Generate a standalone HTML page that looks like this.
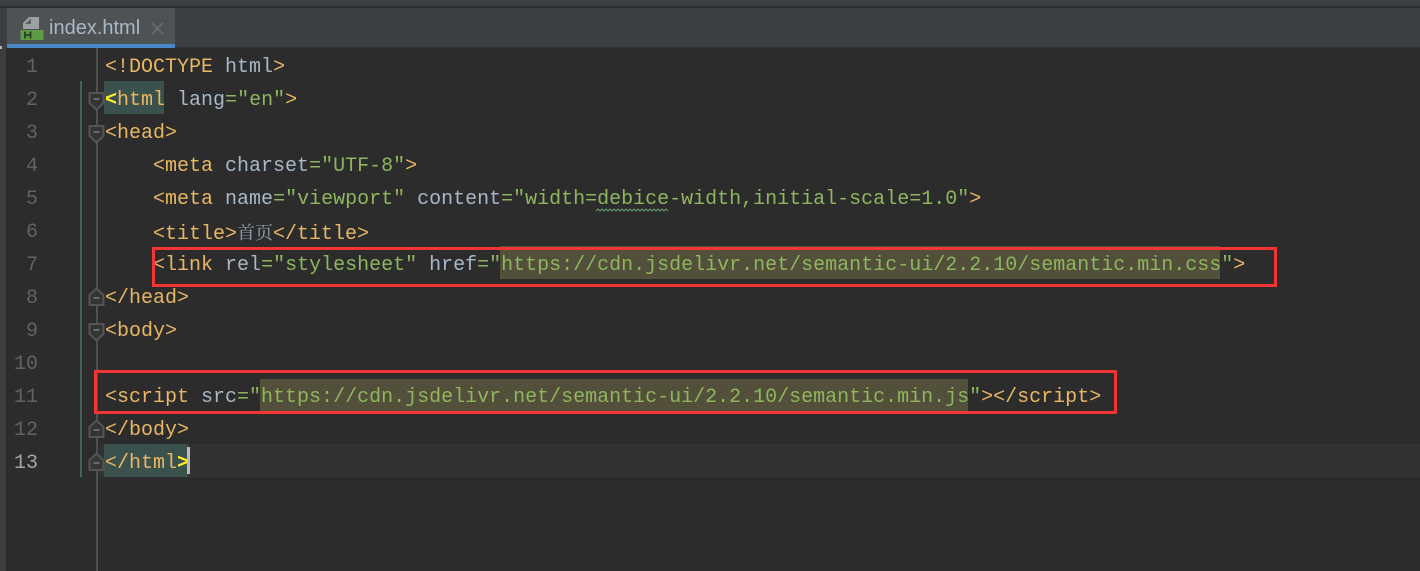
<!DOCTYPE html>
<html lang="zh">
<head>
<meta charset="UTF-8">
<title>index.html</title>
<style>
html,body{margin:0;padding:0;background:#2c2c2c;}
#root{position:relative;width:1420px;height:571px;overflow:hidden;background:#2c2c2c;font-family:"Liberation Mono",monospace;font-size:20px;}
.abs{position:absolute;}
.l{position:absolute;left:105px;height:33px;line-height:33px;white-space:pre;color:#a9b7c6;z-index:3;}
.n{position:absolute;left:6px;width:32px;text-align:right;height:33px;line-height:33px;color:#5f6366;font-size:20px;z-index:3;}
.t{color:#e8b764}.s{color:#8fb55e}.a{color:#a9b7c6}.y{color:#ffef28;font-weight:bold}
.cjk{font-family:"Noto Serif CJK SC",serif;color:#8fa3b5;font-size:18px;}
.box{position:absolute;border:3px solid #f53535;box-sizing:border-box;z-index:5;}
.f{position:absolute;left:88px;z-index:2;}
</style>
</head>
<body>
<div id="root">
  <!-- top chrome -->
  <div class="abs" style="left:0;top:0;width:1420px;height:6px;background:#3c3f41"></div>
  <div class="abs" style="left:0;top:6px;width:1420px;height:2px;background:#2d2d2d"></div>
  <div class="abs" style="left:0;top:8px;width:1420px;height:40px;background:#3c3f41"></div>
  <div class="abs" style="left:0;top:47px;width:1420px;height:1px;background:#323232"></div>
  <!-- left strip -->
  <div class="abs" style="left:0;top:8px;width:6px;height:563px;background:#3c3f41"></div>
  <div class="abs" style="left:0;top:46px;width:2px;height:3px;background:#a9b7c6"></div>
  <!-- tab -->
  <div class="abs" style="left:7px;top:8px;width:168px;height:36px;background:#4e5254"></div>
  <div class="abs" style="left:7px;top:44px;width:168px;height:4px;background:#4a88c7"></div>
  <svg class="abs" style="left:20px;top:16px" width="24" height="25" viewBox="0 0 24 25">
    <path d="M3 13V7L9 1H19V13Z" fill="#9aa0a4"/>
    <path d="M5 8H11V2.5Z" fill="#5f6466"/>
    <rect x="0.5" y="14" width="23" height="10" fill="#5d9b47"/>
    <path d="M5 15.500V22.500M10.500 15.500V22.500M5 19H10.500" stroke="#26401f" stroke-width="1.800" fill="none"/>
  </svg>
  <div class="abs" style="left:49px;top:16px;height:24px;line-height:24px;font-family:'Liberation Sans',sans-serif;font-size:20px;color:#a9b7c6;white-space:pre">index.html</div>
  <svg class="abs" style="left:151px;top:22px" width="13" height="13" viewBox="0 0 13 13"><path d="M1 1L12 12M12 1L1 12" stroke="#6a6e70" stroke-width="1.500"/></svg>

  <!-- current line + highlights -->
  <div class="abs" style="left:97px;top:444px;width:1323px;height:33px;background:#323232"></div>
  <div class="abs" style="left:104px;top:81px;width:60px;height:33px;background:#3b514d"></div>
  <div class="abs" style="left:104px;top:444px;width:84px;height:33px;background:#3b514d"></div>
  <div class="abs" style="left:500px;top:246px;width:720px;height:33px;background:#52503a"></div>
  <div class="abs" style="left:260px;top:379px;width:708px;height:33px;background:#52503a"></div>

  <!-- gutter lines -->
  <div class="abs" style="left:96px;top:48px;width:2px;height:523px;background:#505050;z-index:1"></div>
  <div class="abs" style="left:80px;top:81px;width:2px;height:396px;background:#41635a;z-index:1"></div>

  <!-- fold markers -->
  <svg class="f" style="top:92px" width="17" height="19" viewBox="0 0 17 19"><path d="M1.500 1H15.500V11L8.500 17.500L1.500 11Z" fill="#343434" stroke="#555" stroke-width="2"/><path d="M5.500 7H11.500" stroke="#6a6a6a" stroke-width="2"/></svg>
  <svg class="f" style="top:125px" width="17" height="19" viewBox="0 0 17 19"><path d="M1.500 1H15.500V11L8.500 17.500L1.500 11Z" fill="#343434" stroke="#555" stroke-width="2"/><path d="M5.500 7H11.500" stroke="#6a6a6a" stroke-width="2"/></svg>
  <svg class="f" style="top:287px" width="17" height="19" viewBox="0 0 17 19"><path d="M1.500 18H15.500V8L8.500 1.500L1.500 8Z" fill="#343434" stroke="#555" stroke-width="2"/><path d="M5.500 11H11.500" stroke="#6a6a6a" stroke-width="2"/></svg>
  <svg class="f" style="top:323px" width="17" height="19" viewBox="0 0 17 19"><path d="M1.500 1H15.500V11L8.500 17.500L1.500 11Z" fill="#343434" stroke="#555" stroke-width="2"/><path d="M5.500 7H11.500" stroke="#6a6a6a" stroke-width="2"/></svg>
  <svg class="f" style="top:419px" width="17" height="19" viewBox="0 0 17 19"><path d="M1.500 18H15.500V8L8.500 1.500L1.500 8Z" fill="#343434" stroke="#555" stroke-width="2"/><path d="M5.500 11H11.500" stroke="#6a6a6a" stroke-width="2"/></svg>
  <svg class="f" style="top:452px" width="17" height="19" viewBox="0 0 17 19"><path d="M1.500 18H15.500V8L8.500 1.500L1.500 8Z" fill="#383838" stroke="#555" stroke-width="2"/><path d="M5.500 11H11.500" stroke="#6a6a6a" stroke-width="2"/></svg>

  <!-- line numbers -->
  <div class="n" style="top:51px">1</div>
  <div class="n" style="top:84px">2</div>
  <div class="n" style="top:117px">3</div>
  <div class="n" style="top:150px">4</div>
  <div class="n" style="top:183px">5</div>
  <div class="n" style="top:216px">6</div>
  <div class="n" style="top:249px">7</div>
  <div class="n" style="top:282px">8</div>
  <div class="n" style="top:315px">9</div>
  <div class="n" style="top:348px">10</div>
  <div class="n" style="top:381px">11</div>
  <div class="n" style="top:414px">12</div>
  <div class="n" style="top:447px;color:#a4a3a3">13</div>

  <!-- code -->
  <div class="l" style="top:51px"><span class="t">&lt;!DOCTYPE</span> <span class="a">html</span><span class="t">&gt;</span></div>
  <div class="l" style="top:84px"><span class="y">&lt;</span><span class="t">html</span> <span class="a">lang</span><span class="s">="en"</span><span class="t">&gt;</span></div>
  <div class="l" style="top:117px"><span class="t">&lt;head&gt;</span></div>
  <div class="l" style="top:150px">    <span class="t">&lt;meta</span> <span class="a">charset</span><span class="s">="UTF-8"</span><span class="t">&gt;</span></div>
  <div class="l" style="top:183px">    <span class="t">&lt;meta</span> <span class="a">name</span><span class="s">="viewport"</span> <span class="a">content</span><span class="s">="width=debice-width,initial-scale=1.0"</span><span class="t">&gt;</span></div>
  <div class="l" style="top:216px">    <span class="t">&lt;title&gt;</span><span class="cjk" style="display:inline-block;width:36px">首页</span><span class="t">&lt;/title&gt;</span></div>
  <div class="l" style="top:249px">    <span class="t">&lt;link</span> <span class="a">rel</span><span class="s">="stylesheet"</span> <span class="a">href</span><span class="s">="https://cdn.jsdelivr.net/semantic-ui/2.2.10/semantic.min.css"</span><span class="t">&gt;</span></div>
  <div class="l" style="top:282px"><span class="t">&lt;/head&gt;</span></div>
  <div class="l" style="top:315px"><span class="t">&lt;body&gt;</span></div>
  <div class="l" style="top:381px"><span class="t">&lt;script</span> <span class="a">src</span><span class="s">="https://cdn.jsdelivr.net/semantic-ui/2.2.10/semantic.min.js"</span><span class="t">&gt;&lt;/script&gt;</span></div>
  <div class="l" style="top:414px"><span class="t">&lt;/body&gt;</span></div>
  <div class="l" style="top:447px"><span class="t">&lt;/html</span><span class="y">&gt;</span></div>

  <!-- caret -->
  <div class="abs" style="left:187px;top:447px;width:3px;height:27px;background:#bbbbbb;z-index:4"></div>

  <!-- typo squiggle -->
  <svg class="abs" style="left:596px;top:207px;z-index:4" width="73" height="6" viewBox="0 0 73 6"><path d="M0 4L2 2L4 4L6 2L8 4L10 2L12 4L14 2L16 4L18 2L20 4L22 2L24 4L26 2L28 4L30 2L32 4L34 2L36 4L38 2L40 4L42 2L44 4L46 2L48 4L50 2L52 4L54 2L56 4L58 2L60 4L62 2L64 4L66 2L68 4L70 2L72 4" fill="none" stroke="#659c6b" stroke-width="1"/></svg>

  <!-- red annotation boxes -->
  <div class="box" style="left:152px;top:247px;width:1125px;height:40px"></div>
  <div class="box" style="left:94px;top:370px;width:1023px;height:44px"></div>
</div>
</body>
</html>
